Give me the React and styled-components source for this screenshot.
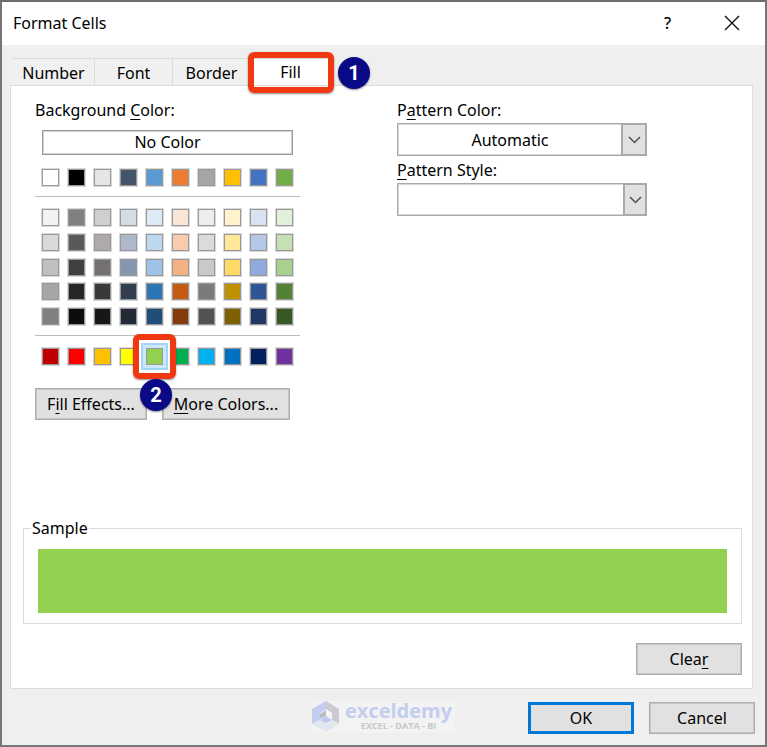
import styled, { createGlobalStyle } from "styled-components"

const GlobalStyle = createGlobalStyle`
    * {
        box-sizing: border-box;
    }

    body {
        margin: 0;
        background: #efefef;
        color: #000;
        font-family: "Noto Sans", "Open Sans", sans-serif;
        font-size: 16px;
        line-height: 20px;
    }

    button, select {
        margin: 0;
        padding: 0;
        color: inherit;
        font: inherit;
    }
`

const Dialog = styled.div`
    display: flex;
    flex-direction: column;
    min-height: 100vh;
    border: 2px solid #767676;
    border-top-color: #6c6c6c;
    background: #efefef;
`

const TitleBar = styled.header`
    display: flex;
    align-items: center;
    height: 43px;
    padding: 0 11px 2px;
    background: #fff;
`

const Title = styled.h1`
    flex: 1;
    margin: 0;
    font-size: 16px;
    font-weight: 400;
`

const TitleButton = styled.button`
    display: flex;
    align-items: center;
    justify-content: center;
    width: 45px;
    height: 32px;
    margin-left: 19px;
    border: 0;
    background: none;
    font-weight: 500;
`

const Tabs = styled.div`
    display: flex;
    height: 27px;
    margin: 13px 12px 0 11px;
`

const Tab = styled.button`
    position: relative;
    width: ${props => props.$width}px;
    border: solid #dcdcdc;
    border-width: 1px 1px 0 0;
    background: ${props => props.$active ? "#fff" : "#f0f0f0"};
    padding-top: ${props => props.$active ? 0 : 2}px;
`

const Marker = styled.span`
    position: absolute;
    z-index: 2;
    inset: ${props => props.$inset};
    border: 6px solid #f03913;
    border-radius: 6px;
    box-shadow: 0 1px 2px rgba(0, 0, 0, 0.45);
    pointer-events: none;
`

const Badge = styled.span`
    position: absolute;
    z-index: 3;
    top: ${props => props.$top}px;
    left: ${props => props.$left}px;
    width: 32px;
    height: 32px;
    border-radius: 50%;
    background: #0a0a86;
    box-shadow: 0 1px 2px rgba(0, 0, 0, 0.45);
    color: #fff;
    font-family: Roboto, sans-serif;
    font-size: 20px;
    font-weight: 700;
    line-height: 32px;
    text-align: center;
    pointer-events: none;
`

const Panel = styled.main`
    display: flex;
    flex: 1;
    flex-direction: column;
    margin: 0 12px 0 8px;
    padding: 14px 10px 13px 12px;
    border: 1px solid #dcdcdc;
    background: #fff;
`

const Columns = styled.div`
    display: grid;
    grid-template-columns: 362fr 345fr;
    padding-left: 12px;
`

const Label = styled.label`
    display: block;
    margin-bottom: 3px;
`

const Caption = styled.div`
    margin-bottom: 10px;
`

const Key = styled.span`
    text-decoration: underline;
    text-decoration-thickness: 1px;
    text-underline-offset: 3px;
`

const Palette = styled.div`
    width: 265px;
`

const NoColor = styled.button`
    display: block;
    width: 251px;
    height: 25px;
    margin: 0 7px 14px;
    border: 1px solid #999;
    background: #fff;
    box-shadow: inset 0 0 0 1px #d2d2d2;
    line-height: 23px;
`

const Swatches = styled.div`
    display: grid;
    grid-template-columns: repeat(10, 17px);
    align-content: space-between;
    column-gap: 9px;
    height: ${props => props.$height}px;
    padding: 0 7px;
`

const Swatch = styled.button`
    position: relative;
    width: 17px;
    height: 17px;
    border: 1px solid #999;
    background: ${props => props.$color};
    box-shadow: ${props => props.$selected ? "0 0 0 3px #cde8fb, 0 0 0 5px #a5d5f8, 0 0 0 8px #fff" : "0 0 0 1px #d8d8d8"};
    z-index: ${props => props.$selected ? 1 : "auto"};
`

const Divider = styled.hr`
    height: 1px;
    margin: 10px 0 12px;
    border: 0;
    background: #bdbdbd;
`

const PaletteActions = styled.div`
    display: flex;
    gap: 15px;
    margin-top: 23px;
`

const Button = styled.button`
    width: ${props => props.$width}px;
    height: 32px;
    border: 1px solid #adadad;
    background: #e1e1e1;
    box-shadow: inset 0 0 0 1px #c6c6c6;
    white-space: nowrap;
`

const PrimaryButton = styled(Button)`
    border: 3px solid #0078d7;
    box-shadow: none;
`

const SelectBox = styled.div`
    position: relative;
    width: 250px;
    height: 33px;
    margin-bottom: 4px;
`

const Select = styled.select`
    width: 100%;
    height: 100%;
    padding-right: 24px;
    border: 1px solid #a9a9ac;
    border-radius: 0;
    background: #fff;
    box-shadow: inset 0 0 0 1px #d6d6d8;
    appearance: none;
    text-align: center;
    text-align-last: center;
`

const Arrow = styled.span`
    position: absolute;
    top: 0;
    right: 0;
    display: flex;
    align-items: center;
    justify-content: center;
    width: ${props => props.$width}px;
    height: 100%;
    border: 2px solid #a9a9ac;
    background: #e1e1e1;
    pointer-events: none;
`

const Sample = styled.fieldset`
    min-width: 0;
    margin: auto 0 19px;
    padding: 11px 14px 10px;
    border: 1px solid #dcdcdc;
`

const Legend = styled.legend`
    margin-left: -7px;
    padding: 0 1px;
`

const SampleFill = styled.div`
    height: 64px;
    background: #92d050;
`

const ClearRow = styled.div`
    display: flex;
    justify-content: flex-end;
`

const Footer = styled.footer`
    display: grid;
    grid-template-columns: 1fr auto 1fr;
    align-items: start;
    padding: 12px 10px 11px;
`

const Watermark = styled.div`
    display: flex;
    grid-column: 2;
    gap: 5px;
    width: 143px;
    height: 32px;
    background: #f3f3f3;
`

const Brand = styled.div`
    color: #c3cdf0;
    font-family: "Open Sans", sans-serif;
    font-size: 20px;
    font-weight: 700;
    line-height: 20px;
`

const Tagline = styled.div`
    color: #c6c8cd;
    font-family: "Open Sans", sans-serif;
    font-size: 9px;
    font-weight: 700;
    line-height: 10px;
    text-align: center;
`

const DialogActions = styled.div`
    display: flex;
    justify-content: flex-end;
    gap: 15px;
    padding-top: 1px;
`

const THEME_COLORS = [
    "#ffffff", "#000000", "#e7e6e6", "#44546a", "#5b9bd5", "#ed7d31", "#a5a5a5", "#ffc000", "#4472c4", "#70ad47",
]

const SHADES = [
    "#f2f2f2", "#808080", "#d0cece", "#d6dce4", "#deebf7", "#fbe5d6", "#ededed", "#fff2cc", "#d9e2f3", "#e2f0d9",
    "#d9d9d9", "#595959", "#aeaaaa", "#adb9ca", "#bdd7ee", "#f8cbad", "#dbdbdb", "#ffe699", "#b4c7e7", "#c5e0b4",
    "#bfbfbf", "#404040", "#767171", "#8497b0", "#9dc3e6", "#f4b183", "#c9c9c9", "#ffd966", "#8faadc", "#a9d18e",
    "#a6a6a6", "#262626", "#3b3838", "#333f50", "#2e75b6", "#c55a11", "#7b7b7b", "#bf9000", "#2f5597", "#548235",
    "#808080", "#0d0d0d", "#171717", "#222a35", "#1f4e79", "#843c0c", "#525252", "#7f6000", "#203864", "#385723",
]

const STANDARD_COLORS = [
    "#c00000", "#ff0000", "#ffc000", "#ffff00", "#92d050", "#00b050", "#00b0f0", "#0070c0", "#002060", "#7030a0",
]

function SwatchGrid({ colors, height, selected }) {
    return (
        <Swatches $height={height}>
            {colors.map((color, i) => (
                <Swatch
                    key={i}
                    type="button"
                    aria-label={color}
                    aria-pressed={color === selected}
                    $color={color}
                    $selected={color === selected}
                >
                    {color === selected && (
                        <>
                            <Marker $inset="-15px -14px" />
                            <Badge $top={30} $left={-7}>2</Badge>
                        </>
                    )}
                </Swatch>
            ))}
        </Swatches>
    )
}

function DropArrow({ width }) {
    return (
        <Arrow $width={width}>
            <svg width="13" height="8" viewBox="0 0 13 8" fill="none" stroke="#505050" strokeWidth="1.5">
                <path d="M1 1l5.5 5.5L12 1" />
            </svg>
        </Arrow>
    )
}

function Logo() {
    return (
        <svg width="28" height="32" viewBox="0 0 28 32">
            <path d="M14 0L0 8v15l8-4v-7l6-4z" fill="#c3cdf0" />
            <path d="M14 0l13 8v15l-7-4v-7l-6-4z" fill="#c9cbd0" />
            <path d="M0 23l8-4 6 3 6-3 7 4-13 8z" fill="#e1e7ee" />
            <path d="M14 9l-6 4v5l6-3z" fill="#b9bcc4" />
            <path d="M14 9l6 4v6l-6-4z" fill="#f6f6f6" />
            <path d="M8 19l6-4 6 4-6 3z" fill="#bccaf2" />
        </svg>
    )
}

export default function App() {
    return (
        <>
            <GlobalStyle />
            <Dialog>
                <TitleBar>
                    <Title>Format Cells</Title>
                    <TitleButton type="button" aria-label="Help">?</TitleButton>
                    <TitleButton type="button" aria-label="Close">
                        <svg width="16" height="16" viewBox="0 0 16 16" stroke="#111" strokeWidth="1.4">
                            <path d="M1 1l14 14M15 1L1 15" />
                        </svg>
                    </TitleButton>
                </TitleBar>

                <Tabs>
                    <Tab type="button" $width={82}>Number</Tab>
                    <Tab type="button" $width={78}>Font</Tab>
                    <Tab type="button" $width={78}>Border</Tab>
                    <Tab type="button" $width={80} $active>
                        Fill
                        <Marker $inset="-7px -4px -8px -3px" />
                        <Badge $top={-2} $left={87}>1</Badge>
                    </Tab>
                </Tabs>

                <Panel>
                    <Columns>
                        <Palette>
                            <Caption>Background <Key>C</Key>olor:</Caption>
                            <NoColor type="button">No Color</NoColor>
                            <SwatchGrid colors={THEME_COLORS} height={17} />
                            <Divider />
                            <SwatchGrid colors={SHADES} height={116} />
                            <Divider />
                            <SwatchGrid colors={STANDARD_COLORS} height={17} selected="#92d050" />
                            <PaletteActions>
                                <Button type="button" $width={112}>F<Key>i</Key>ll Effects...</Button>
                                <Button type="button" $width={128}><Key>M</Key>ore Colors...</Button>
                            </PaletteActions>
                        </Palette>

                        <div>
                            <Label htmlFor="pattern-color">P<Key>a</Key>ttern Color:</Label>
                            <SelectBox>
                                <Select id="pattern-color">
                                    <option>Automatic</option>
                                </Select>
                                <DropArrow width={26} />
                            </SelectBox>
                            <Label htmlFor="pattern-style"><Key>P</Key>attern Style:</Label>
                            <SelectBox>
                                <Select id="pattern-style">
                                    <option aria-label="Solid" />
                                </Select>
                                <DropArrow width={24} />
                            </SelectBox>
                        </div>
                    </Columns>

                    <Sample>
                        <Legend>Sample</Legend>
                        <SampleFill />
                    </Sample>

                    <ClearRow>
                        <Button type="button" $width={106}>Clea<Key>r</Key></Button>
                    </ClearRow>
                </Panel>

                <Footer>
                    <Watermark>
                        <Logo />
                        <div>
                            <Brand>exceldemy</Brand>
                            <Tagline>EXCEL - DATA - BI</Tagline>
                        </div>
                    </Watermark>
                    <DialogActions>
                        <PrimaryButton type="button" $width={106}>OK</PrimaryButton>
                        <Button type="button" $width={106}>Cancel</Button>
                    </DialogActions>
                </Footer>
            </Dialog>
        </>
    )
}
